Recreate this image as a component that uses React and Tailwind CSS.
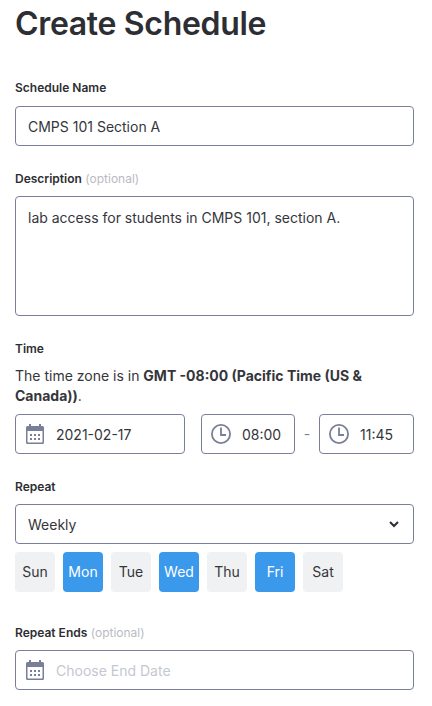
const font = { fontFamily: 'Inter, sans-serif' };

function CalendarIcon() {
  return (
    <svg width="18" height="20" viewBox="0 0 18 20" className="shrink-0 text-[#7a7f99]" fill="currentColor">
      <rect x="3" y="0" width="2" height="4" />
      <rect x="13" y="0" width="2" height="4" />
      <path fillRule="evenodd" d="M1.5 2H16.5A1.5 1.5 0 0 1 18 3.5V18.5A1.5 1.5 0 0 1 16.5 20H1.5A1.5 1.5 0 0 1 0 18.5V3.5A1.5 1.5 0 0 1 1.5 2ZM1.5 7V18C1.5 18.3 1.7 18.5 2 18.5H16C16.3 18.5 16.5 18.3 16.5 18V7Z" />
      <rect x="4" y="10" width="2" height="2" />
      <rect x="8" y="10" width="2" height="2" />
      <rect x="12" y="10" width="2" height="2" />
      <rect x="4" y="14" width="2" height="2" />
      <rect x="8" y="14" width="2" height="2" />
      <rect x="12" y="14" width="2" height="2" />
    </svg>
  );
}

function ClockIcon() {
  return (
    <svg width="20" height="20" viewBox="0 0 20 20" className="shrink-0 text-[#7a7f99]" fill="none" stroke="currentColor" strokeWidth="1.8">
      <circle cx="10" cy="10" r="9.1" />
      <path d="M10 3.5V11H15" />
    </svg>
  );
}

function Label({ children, optional }) {
  return (
    <div className="text-xs leading-4 font-semibold text-[#2d2e33]">
      {children}
      {optional && <span className="font-normal text-[#b9bbc2]"> (optional)</span>}
    </div>
  );
}

function TimeBox({ value, className }) {
  return (
    <div className={`flex h-10 items-center gap-[11px] rounded border border-[#7a7f99] pl-[9px] text-sm text-[#35363b] ${className}`}>
      <ClockIcon />
      <span className="pt-[2px]">{value}</span>
    </div>
  );
}

const days = [
  ['Sun', false],
  ['Mon', true],
  ['Tue', false],
  ['Wed', true],
  ['Thu', false],
  ['Fri', true],
  ['Sat', false],
];

export default function App() {
  return (
    <div style={font} className="h-[706px] w-[432px] overflow-hidden bg-white pl-[15px] pr-[18px] text-[#35363b]">
      <h1 className="pt-[4px] text-[32px] leading-10 font-semibold tracking-[-0.33px] text-[#2d2e33]">Create Schedule</h1>

      <div className="mt-[36px]">
        <Label>Schedule Name</Label>
        <div className="mt-[10px] flex h-10 items-center rounded border border-[#7a7f99] px-3 pt-[2px] text-sm">CMPS 101 Section A</div>
      </div>

      <div className="mt-[25px]">
        <Label optional>Description</Label>
        <div className="mt-[9px] h-[120px] rounded border border-[#7a7f99] px-3 py-[11px] text-sm leading-5">
          lab access for students in CMPS 101, section A.
        </div>
      </div>

      <div className="mt-[25px]">
        <Label>Time</Label>
        <p className="mt-[9px] text-sm leading-5">
          The time zone is in <b className="font-bold">GMT -08:00 (Pacific Time (US &amp; Canada))</b>.
        </p>
        <div className="mt-[8px] flex items-center">
          <div className="flex h-10 w-[170px] items-center gap-[12px] rounded border border-[#7a7f99] pl-[10px] text-sm">
            <CalendarIcon />
            <span className="pt-[2px]">2021-02-17</span>
          </div>
          <TimeBox value="08:00" className="ml-4 w-[94px]" />
          <span className="w-[24px] text-center text-sm text-[#7a7f99]">-</span>
          <TimeBox value="11:45" className="w-[95px]" />
        </div>
      </div>

      <div className="mt-[25px]">
        <Label>Repeat</Label>
        <div className="mt-[9px] flex h-10 items-center justify-between rounded border border-[#7a7f99] pr-[14px] pl-3 text-sm">
          <span className="pt-[2px]">Weekly</span>
          <svg width="10" height="7" viewBox="0 0 10 7" fill="none" stroke="#2d2e33" strokeWidth="2">
            <path d="M1 1L5 5L9 1" />
          </svg>
        </div>
        <div className="mt-2 flex gap-2">
          {days.map(([name, on]) => (
            <div
              key={name}
              className={
                on
                  ? 'flex size-10 items-center justify-center rounded-sm bg-[#3b99eb] text-sm text-white'
                  : 'flex size-10 items-center justify-center rounded-sm bg-[#f0f1f3] text-sm text-[#35363b]'
              }
            >
              {name}
            </div>
          ))}
        </div>
      </div>

      <div className="mt-[33px]">
        <Label optional>Repeat Ends</Label>
        <div className="mt-[9px] flex h-10 items-center gap-[12px] rounded border border-[#7a7f99] pl-[10px] text-sm text-[#c4c8d0]">
          <CalendarIcon />
          <span className="pt-[2px]">Choose End Date</span>
        </div>
      </div>
    </div>
  );
}
